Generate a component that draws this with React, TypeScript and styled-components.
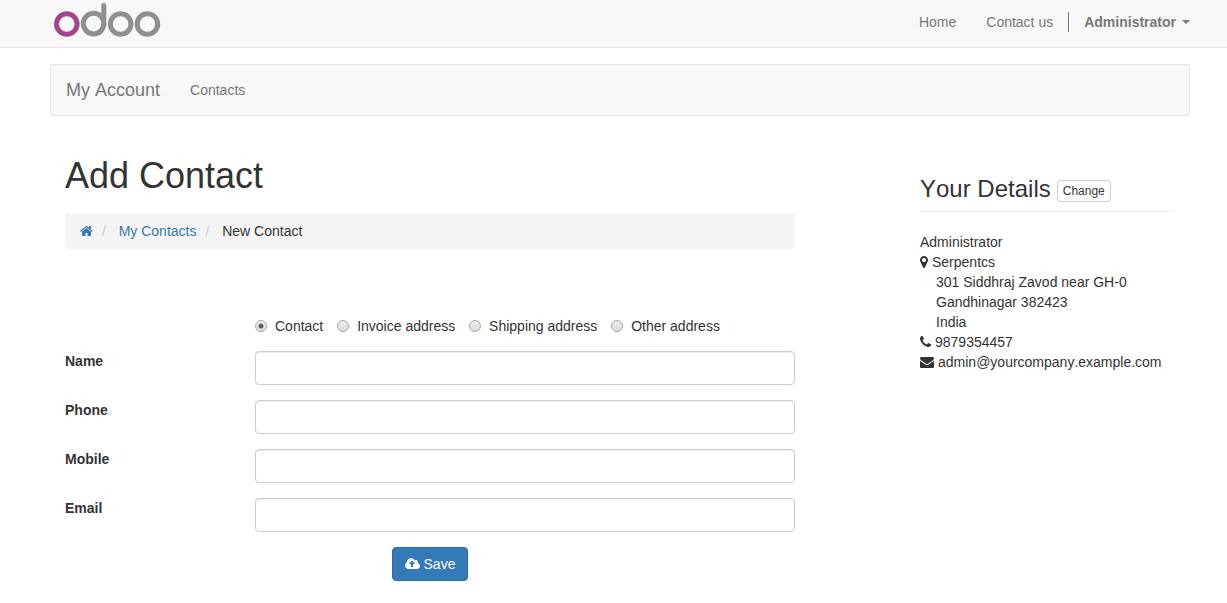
import React from 'react';
import styled, { createGlobalStyle } from 'styled-components';

const GlobalStyle = createGlobalStyle`
  *, *::before, *::after { box-sizing: border-box; }
  body {
    margin: 0;
    background: #fff;
    color: #333;
    font-family: "Liberation Sans", Arial, sans-serif;
    font-size: 14px;
    line-height: 20px;
    font-kerning: none;
  }
  a { text-decoration: none; }
`;

const TopBar = styled.header`
  display: flex;
  align-items: flex-start;
  justify-content: space-between;
  height: 48px;
  padding: 0 37px 0 50px;
  background: #f8f8f8;
  border-bottom: 1px solid #e7e7e7;
`;

const LogoLink = styled.a`
  display: block;
  padding-left: 4px;
  svg { display: block; }
`;

const TopNav = styled.nav`
  display: flex;
  align-items: center;
  padding-top: 12px;
`;

const NavLink = styled.a`
  padding: 0 15px;
  color: #777;
`;

const UserButton = styled.button`
  display: flex;
  align-items: center;
  gap: 6px;
  margin: 0;
  padding: 0 0 0 15px;
  border: 0;
  border-left: 1px solid #777;
  background: none;
  color: #777;
  font: inherit;
  font-kerning: none;
  font-weight: bold;
  cursor: pointer;
`;

const Caret = styled.span`
  border-top: 4px solid;
  border-left: 4px solid transparent;
  border-right: 4px solid transparent;
`;

const Page = styled.div`
  padding: 16px 37px 22px 50px;
`;

const AccountBar = styled.nav`
  display: flex;
  align-items: center;
  gap: 30px;
  min-height: 52px;
  padding: 0 15px;
  background: #f8f8f8;
  border: 1px solid #e7e7e7;
  border-radius: 4px;
`;

const AccountLink = styled.a<{ $brand?: boolean }>`
  color: #777;
  font-size: ${(p) => (p.$brand ? 18 : 14)}px;
`;

const Columns = styled.div`
  display: grid;
  grid-template-columns: minmax(0, 8fr) minmax(0, 1fr) minmax(0, 3fr);
  padding-top: 40px;
`;

const Main = styled.main`
  padding: 0 15px;
`;

const Title = styled.h1`
  margin: 0 0 17px;
  font-size: 36px;
  line-height: 40px;
  font-weight: 500;
`;

const Breadcrumb = styled.ol`
  margin: 0 0 67px;
  padding: 8px 15px;
  list-style: none;
  background: #f5f5f5;
  border-radius: 4px;
`;

const Crumb = styled.li`
  display: inline-block;
  vertical-align: top;
  & + &::before {
    content: "/\\00a0";
    padding: 0 9px 0 5px;
    color: #ccc;
  }
  a { color: #337ab7; }
`;

const Form = styled.form`
  display: grid;
  row-gap: 15px;
`;

const Field = styled.div`
  display: grid;
  grid-template-columns: minmax(0, 3fr) minmax(0, 9fr);
  margin-right: -30px;
`;

const FieldLabel = styled.label`
  font-weight: bold;
`;

const FieldControl = styled.div`
  padding-right: 30px;
`;

const TextInput = styled.input`
  display: block;
  width: 100%;
  height: 34px;
  padding: 6px 12px;
  border: 1px solid #ccc;
  border-radius: 4px;
  background: #fff;
  color: #555;
  font: inherit;
  box-shadow: inset 0 1px 1px rgba(0, 0, 0, 0.075);
`;

const RadioGroup = styled.div`
  grid-column: 2;
`;

const RadioLabel = styled.label`
  display: inline-flex;
  align-items: center;
  gap: 8px;
  margin-right: 10px;
  vertical-align: top;
`;

const Radio = styled.input`
  appearance: none;
  width: 12px;
  height: 12px;
  margin: 0;
  border: 1px solid #a9a9a9;
  border-radius: 50%;
  background: linear-gradient(#ededed, #dcdcdc);
  &:checked {
    background: radial-gradient(circle, #5c5c5c 0 2px, transparent 3px), linear-gradient(#ededed, #dcdcdc);
  }
`;

const SaveButton = styled.button`
  justify-self: center;
  display: inline-flex;
  align-items: center;
  gap: 4px;
  padding: 6px 12px;
  border: 1px solid #2e6da4;
  border-radius: 4px;
  background: #337ab7;
  color: #fff;
  font: inherit;
  font-kerning: none;
  cursor: pointer;
`;

const Details = styled.aside`
  grid-column: 3;
  padding: 20px 15px 0;
`;

const DetailsHeader = styled.div`
  display: flex;
  align-items: flex-end;
  gap: 6px;
  margin-bottom: 20px;
  padding-bottom: 9px;
  border-bottom: 1px solid #eee;
`;

const DetailsTitle = styled.h2`
  margin: 0;
  font-size: 24px;
  line-height: 26px;
  font-weight: 500;
  white-space: nowrap;
`;

const ChangeButton = styled.button`
  padding: 1px 5px;
  border: 1px solid #ccc;
  border-radius: 3px;
  background: #fff;
  color: #333;
  font: inherit;
  font-size: 12px;
  line-height: 18px;
  cursor: pointer;
`;

const Address = styled.address`
  font-style: normal;
`;

const AddressLine = styled.div<{ $indent?: boolean }>`
  display: flex;
  align-items: center;
  gap: 4px;
  padding-left: ${(p) => (p.$indent ? 16 : 0)}px;
`;

const Glyph = styled.svg`
  flex: none;
  height: 14px;
  fill: currentColor;
`;

const InlineGlyph = styled(Glyph)`
  display: block;
  margin: 3px 0;
`;

const HomeIcon = () => (
  <InlineGlyph width="13" viewBox="64 0 1664 1792" aria-hidden="true">
    <path d="M1472 992v480q0 26-19 45t-45 19h-384v-384h-256v384h-384q-26 0-45-19t-19-45v-480q0-1 .5-3t.5-3l575-474 575 474q1 2 1 6zm223-69l-62 74q-8 9-21 11h-3q-13 0-21-7l-692-577-692 577q-12 8-24 7-13-2-21-11l-62-74q-8-10-7-23.5t11-21.5l719-599q32-26 76-26t76 26l244 204v-195q0-14 9-23t23-9h192q14 0 23 9t9 23v408l219 182q10 8 11 21.5t-7 23.5z" />
  </InlineGlyph>
);

const MarkerIcon = () => (
  <Glyph width="8" viewBox="384 0 1024 1792" aria-hidden="true">
    <path d="M1152 640q0-106-75-181t-181-75-181 75-75 181 75 181 181 75 181-75 75-181zm256 0q0 109-33 179l-364 774q-16 33-47.5 52t-67.5 19-67.5-19-46.5-52l-365-774q-33-70-33-179 0-212 150-362t362-150 362 150 150 362z" />
  </Glyph>
);

const PhoneIcon = () => (
  <Glyph width="11" viewBox="192 0 1408 1792" aria-hidden="true">
    <path d="M1600 1240q0 27-10 70.5t-21 68.5q-21 50-122 106-94 51-186 51-27 0-52.5-3.5t-57.5-12.5-47.5-14.5-55.5-20.5-49-18q-98-35-175-83-128-79-264.5-215.5t-215.5-264.5q-48-77-83-175-3-9-18-49t-20.5-55.5-14.5-47.5-12.5-57.5-3.5-52.5q0-92 51-186 56-101 106-122 25-11 68.5-21t70.5-10q14 0 21 3 18 6 53 76 11 19 30 54t35 63.5 31 53.5q3 4 17.5 25t21.5 35.5 7 28.5q0 20-28.5 50t-62 55-62 53-28.5 46q0 9 5 22.5t8.5 20.5 14 24 11.5 19q76 137 174 235t235 174q2 1 19 11.5t24 14 20.5 8.5 22.5 5q18 0 46-28.5t53-62 55-62 50-28.5q14 0 28.5 7t35.5 21.5 25 17.5q25 15 53.5 31t63.5 35 54 30q70 35 76 53 3 7 3 21z" />
  </Glyph>
);

const EnvelopeIcon = () => (
  <Glyph width="14" viewBox="0 0 1792 1792" aria-hidden="true">
    <path d="M1792 710v794q0 66-47 113t-113 47h-1472q-66 0-113-47t-47-113v-794q44 49 101 87 362 246 497 345 57 42 92.5 65.5t94.5 48 110 24.5h2q51 0 110-24.5t94.5-48 92.5-65.5q170-123 498-345 57-39 100-87zm0-294q0 79-49 151t-122 123q-376 261-468 325-10 7-42.5 31t-54 38.5-52 32.5-57.5 27-50 9h-2q-23 0-50-9t-57.5-27-52-32.5-54-38.5-42.5-31q-91-64-262-182.5t-205-142.5q-62-42-117-115.5t-55-136.5q0-78 41.5-130t118.5-52h1472q65 0 112.5 47t47.5 113z" />
  </Glyph>
);

const CloudUploadIcon = () => (
  <Glyph width="15" viewBox="0 0 1920 1792" aria-hidden="true">
    <path d="M1280 864q0-14-9-23l-352-352q-9-9-23-9t-23 9l-351 351q-10 12-10 24 0 14 9 23t23 9h224v352q0 13 9.5 22.5t22.5 9.5h192q13 0 22.5-9.5t9.5-22.5v-352h224q13 0 22.5-9.5t9.5-22.5zm640 288q0 159-112.5 271.5t-271.5 112.5h-1088q-185 0-316.5-131.5t-131.5-316.5q0-130 70-240t188-165q-2-30-2-43 0-212 150-362t362-150q156 0 285.5 87t188.5 231q71-62 166-62 106 0 181 75t75 181q0 76-41 138 130 31 213.5 135.5t83.5 238.5z" />
  </Glyph>
);

const Logo = () => (
  <svg width="107" height="40" viewBox="54 0 107 40" fill="none" stroke="#8f8f8f" strokeWidth="5" role="img" aria-label="Odoo">
    <circle cx="66.8" cy="24" r="10.3" stroke="#a24689" />
    <circle cx="93.6" cy="23.6" r="10.3" />
    <path d="M103.8 5.6V23.6" strokeLinecap="round" />
    <circle cx="120.7" cy="24" r="10.3" />
    <circle cx="147.4" cy="24" r="10.3" />
  </svg>
);

const addressTypes = ['Contact', 'Invoice address', 'Shipping address', 'Other address'];

const fields = [
  { id: 'name', label: 'Name', type: 'text' },
  { id: 'phone', label: 'Phone', type: 'tel' },
  { id: 'mobile', label: 'Mobile', type: 'tel' },
  { id: 'email', label: 'Email', type: 'email' },
];

export default function App() {
  return (
    <>
      <GlobalStyle />
      <TopBar>
        <LogoLink href="#"><Logo /></LogoLink>
        <TopNav>
          <NavLink href="#">Home</NavLink>
          <NavLink href="#">Contact us</NavLink>
          <UserButton type="button">Administrator<Caret /></UserButton>
        </TopNav>
      </TopBar>
      <Page>
        <AccountBar>
          <AccountLink $brand href="#">My Account</AccountLink>
          <AccountLink href="#">Contacts</AccountLink>
        </AccountBar>
        <Columns>
          <Main>
            <Title>Add Contact</Title>
            <Breadcrumb>
              <Crumb><a href="#" aria-label="Home"><HomeIcon /></a></Crumb>{' '}
              <Crumb><a href="#">My Contacts</a></Crumb>{' '}
              <Crumb>New Contact</Crumb>
            </Breadcrumb>
            <Form onSubmit={(e) => e.preventDefault()}>
              <Field>
                <RadioGroup role="radiogroup" aria-label="Address type">
                  {addressTypes.map((type, i) => (
                    <React.Fragment key={type}>
                      <RadioLabel>
                        <Radio type="radio" name="type" value={type} defaultChecked={i === 0} />
                        {type}
                      </RadioLabel>{' '}
                    </React.Fragment>
                  ))}
                </RadioGroup>
              </Field>
              {fields.map((f) => (
                <Field key={f.id}>
                  <FieldLabel htmlFor={f.id}>{f.label}</FieldLabel>
                  <FieldControl><TextInput id={f.id} name={f.id} type={f.type} /></FieldControl>
                </Field>
              ))}
              <SaveButton type="submit"><CloudUploadIcon />Save</SaveButton>
            </Form>
          </Main>
          <Details>
            <DetailsHeader>
              <DetailsTitle>Your Details</DetailsTitle>
              <ChangeButton type="button">Change</ChangeButton>
            </DetailsHeader>
            <Address>
              <AddressLine>Administrator</AddressLine>
              <AddressLine><MarkerIcon />Serpentcs</AddressLine>
              <AddressLine $indent>301 Siddhraj Zavod near GH-0</AddressLine>
              <AddressLine $indent>Gandhinagar 382423</AddressLine>
              <AddressLine $indent>India</AddressLine>
              <AddressLine><PhoneIcon />9879354457</AddressLine>
              <AddressLine><EnvelopeIcon />admin@yourcompany.example.com</AddressLine>
            </Address>
          </Details>
        </Columns>
      </Page>
    </>
  );
}
